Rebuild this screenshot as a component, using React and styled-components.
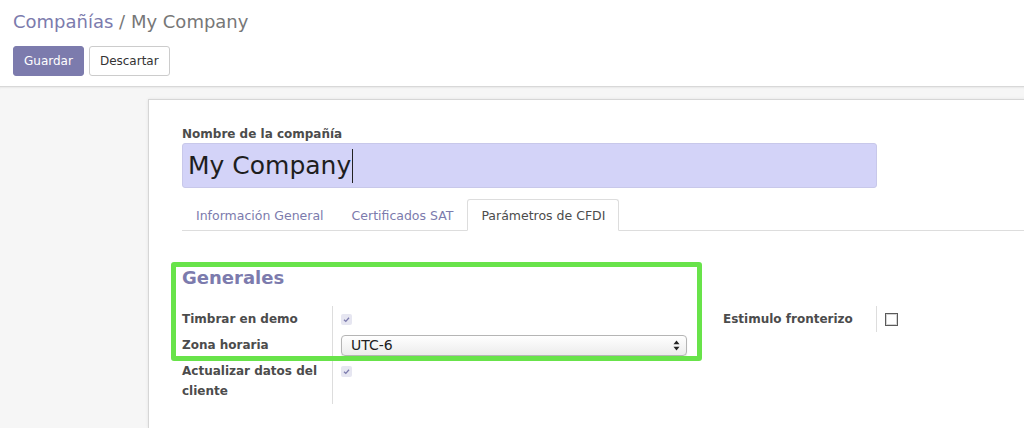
import React from "react";
import styled, { createGlobalStyle } from "styled-components";

const GlobalStyle = createGlobalStyle`
  html, body {
    margin: 0;
    padding: 0;
    overflow: hidden;
    background: #ffffff;
  }
  body {
    font-family: "DejaVu Sans", "Liberation Sans", sans-serif;
    font-size: 12px;
    color: #4c4c4c;
  }
  * { box-sizing: border-box; }
`;

const Shell = styled.div`
  width: 1024px;
  height: 428px;
  display: flex;
  flex-direction: column;
  overflow: hidden;
`;

const ControlPanel = styled.header`
  height: 87px;
  flex: none;
  padding: 11px 13px 0;
  background: #ffffff;
  border-bottom: 1px solid #d8d8d8;
`;

const Breadcrumb = styled.div`
  font-size: 18px;
  line-height: 22px;
  color: #777777;
  white-space: nowrap;
`;

const CrumbLink = styled.span`
  color: #7c7bad;
`;

const ButtonBar = styled.div`
  margin-top: 13px;
  display: flex;
  gap: 5px;
`;

const Button = styled.button`
  height: 30px;
  padding: 0 10px;
  font-family: "DejaVu Sans", sans-serif;
  font-size: 12px;
  border-radius: 3px;
  border: 1px solid ${(p) => (p.$primary ? "#7c7bad" : "#cccccc")};
  background: ${(p) => (p.$primary ? "#7c7bad" : "#ffffff")};
  color: ${(p) => (p.$primary ? "#ffffff" : "#333333")};
`;

const Content = styled.main`
  flex: 1;
  background: #f6f6f6;
  padding-top: 12px;
  box-shadow: inset 0 2px 2px -1px rgba(0, 0, 0, 0.06);
`;

const Sheet = styled.section`
  margin-left: 148px;
  width: 1150px;
  height: 100%;
  background: #ffffff;
  border: 1px solid #d6d6d6;
  border-bottom: none;
  box-shadow: 0 0 3px rgba(0, 0, 0, 0.08);
  padding: 26px 33px 0;
`;

const FieldLabel = styled.div`
  font-weight: bold;
  font-size: 12px;
  line-height: 16px;
  color: #4c4c4c;
`;

const TitleInput = styled.div`
  margin-top: 1px;
  width: 695px;
  height: 45px;
  background: #d3d3f8;
  border: 1px solid #c8c8ea;
  border-radius: 3px;
  padding: 0 5px;
  display: flex;
  align-items: center;
  font-size: 25px;
  color: #1e1e1e;
`;

const Caret = styled.span`
  display: inline-block;
  width: 1px;
  height: 34px;
  background: #222222;
  margin-left: 1px;
`;

const Tabs = styled.nav`
  margin-top: 11px;
  display: flex;
  border-bottom: 1px solid #dddddd;
`;

const Tab = styled.div`
  height: 32px;
  padding: 0 13px;
  margin-bottom: -1px;
  border: 1px solid ${(p) => (p.$active ? "#dddddd" : "transparent")};
  border-bottom: 1px solid ${(p) => (p.$active ? "#ffffff" : "transparent")};
  border-radius: 3px 3px 0 0;
  background: ${(p) => (p.$active ? "#ffffff" : "transparent")};
  color: ${(p) => (p.$active ? "#4c4c4c" : "#7c7bad")};
  font-size: 12.5px;
  line-height: 31px;
  white-space: nowrap;
`;

const Page = styled.div`
  position: relative;
  padding-top: 36px;
`;

const GroupTitle = styled.h2`
  margin: 0;
  font-size: 18px;
  line-height: 22px;
  font-weight: bold;
  color: #7c7bad;
`;

const GroupRow = styled.div`
  margin-top: 17px;
  display: flex;
`;

const Group = styled.div`
  width: 541px;
  display: grid;
  grid-template-columns: ${(p) => p.$labelWidth}px 1fr;
  align-content: start;
`;

const LabelCell = styled.div`
  padding: 3px 8px 3px 0;
  line-height: 20px;
  font-weight: bold;
  font-size: 12px;
  color: #4c4c4c;
  border-right: 1px solid #dddddd;
`;

const ValueCell = styled.div`
  padding: 3px 36px 3px 8px;
  display: flex;
  align-items: flex-start;
`;

const Line = styled.div`
  height: 20px;
  display: flex;
  align-items: center;
  width: 100%;
`;

const CheckedBox = styled.span`
  width: 11px;
  height: 11px;
  border-radius: 2px;
  background: #e6e6f1;
  display: inline-flex;
  align-items: center;
  justify-content: center;
`;

const EmptyBox = styled.span`
  width: 13px;
  height: 13px;
  margin-top: 4px;
  border: 1px solid #5a5a5a;
  box-shadow: inset 0 0 0 1px #d4d4d4;
  background: #ffffff;
`;

const Select = styled.div`
  width: 100%;
  height: 21px;
  border: 1px solid #b5b5b5;
  border-radius: 4px;
  background: linear-gradient(#ffffff, #ececec);
  box-shadow: 0 1px 1px rgba(0, 0, 0, 0.12);
  display: flex;
  align-items: center;
  justify-content: space-between;
  padding: 0 6px 0 9px;
  font-size: 14px;
  color: #222222;
`;

const Highlight = styled.div`
  position: absolute;
  left: -11px;
  top: 31px;
  width: 531px;
  height: 99px;
  border: 5px solid #68e34a;
  border-radius: 3px;
  pointer-events: none;
`;

const Check = () => (
  <svg width="9" height="9" viewBox="0 0 9 9">
    <path d="M2 4.8 L3.8 6.4 L7 2.8" fill="none" stroke="#7c7bad" strokeWidth="1.3" />
  </svg>
);

const Arrows = () => (
  <svg width="7" height="11" viewBox="0 0 7 11">
    <path d="M3.5 0.5 L6.5 4.3 L0.5 4.3 Z" fill="#222" />
    <path d="M3.5 10.5 L6.5 6.7 L0.5 6.7 Z" fill="#222" />
  </svg>
);

export default function App() {
  return (
    <>
      <GlobalStyle />
      <Shell>
        <ControlPanel>
          <Breadcrumb>
            <CrumbLink>Compañías</CrumbLink> / My Company
          </Breadcrumb>
          <ButtonBar>
            <Button $primary>Guardar</Button>
            <Button>Descartar</Button>
          </ButtonBar>
        </ControlPanel>
        <Content>
          <Sheet>
            <FieldLabel>Nombre de la compañía</FieldLabel>
            <TitleInput>
              My Company
              <Caret />
            </TitleInput>
            <Tabs>
              <Tab>Información General</Tab>
              <Tab>Certificados SAT</Tab>
              <Tab $active>Parámetros de CFDI</Tab>
            </Tabs>
            <Page>
              <GroupTitle>Generales</GroupTitle>
              <GroupRow>
                <Group $labelWidth={151}>
                  <LabelCell>Timbrar en demo</LabelCell>
                  <ValueCell>
                    <Line>
                      <CheckedBox>
                        <Check />
                      </CheckedBox>
                    </Line>
                  </ValueCell>
                  <LabelCell>Zona horaria</LabelCell>
                  <ValueCell>
                    <Line>
                      <Select>
                        <span>UTC-6</span>
                        <Arrows />
                      </Select>
                    </Line>
                  </ValueCell>
                  <LabelCell>Actualizar datos del cliente</LabelCell>
                  <ValueCell>
                    <Line>
                      <CheckedBox>
                        <Check />
                      </CheckedBox>
                    </Line>
                  </ValueCell>
                </Group>
                <Group $labelWidth={154}>
                  <LabelCell>Estimulo fronterizo</LabelCell>
                  <ValueCell>
                    <EmptyBox />
                  </ValueCell>
                </Group>
              </GroupRow>
              <Highlight />
            </Page>
          </Sheet>
        </Content>
      </Shell>
    </>
  );
}
